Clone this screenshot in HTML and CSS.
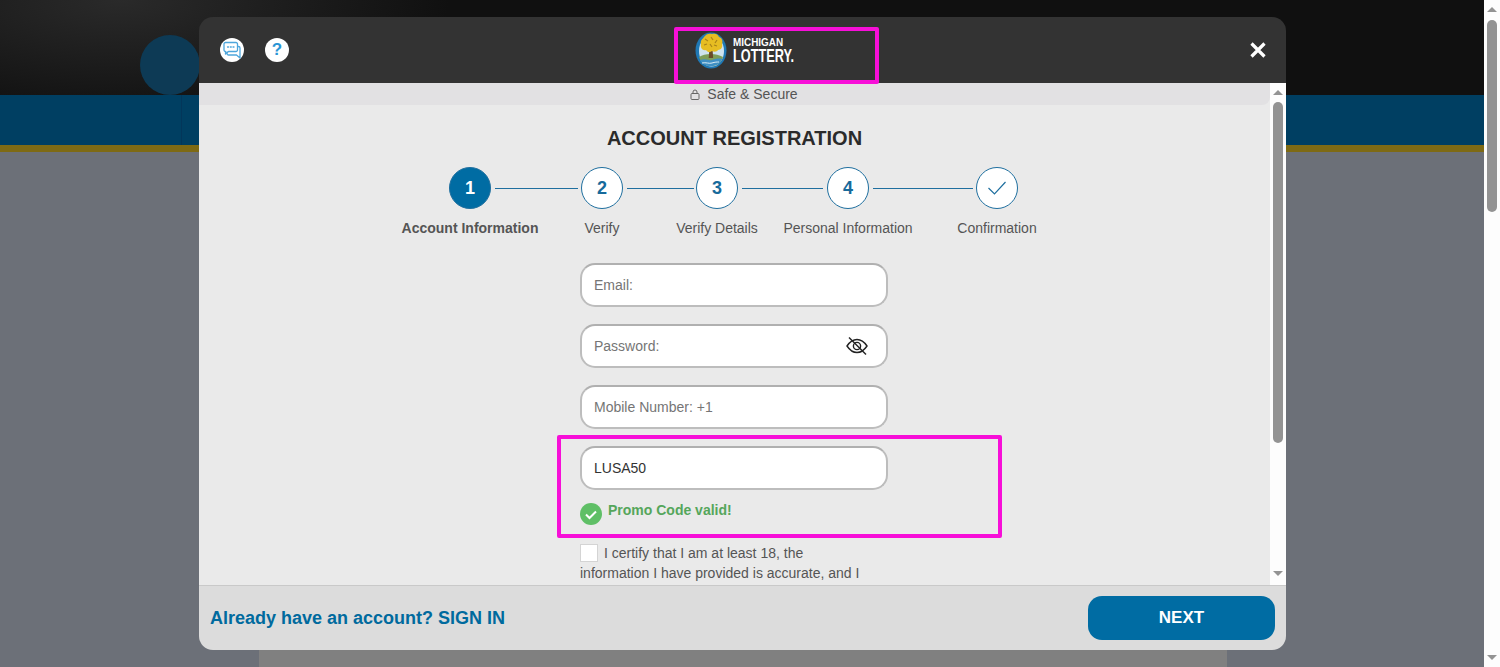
FILE: index.html
```html
<!DOCTYPE html>
<html lang="en">
<head>
    <meta charset="UTF-8">
    <meta name="viewport" content="width=device-width, initial-scale=1.0">
    <title>Michigan Lottery - Account Registration</title>
    <link rel="stylesheet" href="styles.css">
</head>
<body>
    <div class="page">
        <div class="site">
            <header class="site-header"><span class="site-logo"></span></header>
            <nav class="site-nav"><span class="nav-item"></span></nav>
            <main class="site-main">
                <section class="site-panel">
                    <p>Over 140 online games with chances to win up to $500,000 instantly!</p>
                </section>
            </main>
        </div>
        <div class="scrollbar page-scrollbar">
            <span class="arrow-up"></span>
            <span class="thumb"></span>
            <span class="arrow-down"></span>
        </div>
    </div>

    <div class="modal">
        <div class="modal-header">
            <div class="header-icons">
                <span class="round-icon">
                    <svg width="20" height="20" viewBox="0 0 20 20" fill="none" stroke="#4ea6dc" stroke-width="1.3" stroke-linejoin="round">
                        <path d="M3.5 2.5h10.5a1.5 1.5 0 0 1 1.5 1.5v6a1.5 1.5 0 0 1-1.5 1.5H6.5l-3 2.5v-2.5a1.5 1.5 0 0 1-1.5-1.5V4a1.5 1.5 0 0 1 1.5-1.5z"/>
                        <path d="M15.5 6.5h1a1.5 1.5 0 0 1 1.5 1.5v10l-3.5-3H6.5A1.5 1.5 0 0 1 5 13.5v-2"/>
                        <path d="M5.5 7h1M8.3 7h1M11 7h1" stroke-linecap="round"/>
                    </svg>
                </span>
                <span class="round-icon help-icon">?</span>
            </div>
            <div class="brand">
                <svg class="brand-mark" width="32" height="37" viewBox="0 0 32 37">
                    <ellipse cx="16" cy="18.5" rx="15.5" ry="18" fill="#1f78b4"/>
                    <ellipse cx="16.5" cy="19" rx="12.5" ry="15.5" fill="#cfe3ee"/>
                    <path d="M4 25c6-4 17-4 24 0-2 6-6 9-12 9S6 31 4 25z" fill="#7f9e5a"/>
                    <path d="M5 28c6-2 9 1 12 0s7-2 10-1c-2 5-6 7-11 7s-9-2-11-6z" fill="#3f8fc4"/>
                    <path d="M7 31c4-1 7 1 10 0s5-1 7-1" fill="none" stroke="#d8ecf5" stroke-width="1"/>
                    <path d="M14.5 16h3l.6 10h-4.4z" fill="#6a4a28"/>
                    <path d="M6 12c-1-4 2-5 3-7 2-3 5-4 8-3 3-1 6 0 7 3 3 1 4 4 3 7 1 3-1 6-4 6-1 2-4 2-6 1-2 2-5 1-6-1-3 1-6-2-5-6z" fill="#e6bd22"/>
                    <path d="M10 7l3 2M16 5l2 3M22 8l-2 3M9 13l3-1M15 12l2 3M22 14l-3-1" stroke="#a9831a" stroke-width="1.2" fill="none"/>
                </svg>
                <div class="brand-name">
                    <span class="brand-top">MICHIGAN</span>
                    <span class="brand-bottom">LOTTERY.</span>
                </div>
            </div>
            <svg class="close-icon" width="18" height="18" viewBox="0 0 18 18">
                <path d="M2.5 2.5l13 13M15.5 2.5l-13 13" stroke="#fff" stroke-width="3.2"/>
            </svg>
        </div>

        <div class="modal-content">
            <div class="reg-body">
                <div class="safe-bar">
                    <svg width="10" height="11" viewBox="0 0 10 11" fill="none" stroke="#666" stroke-width="1">
                        <rect x="1" y="4.5" width="8" height="6" rx="1"/>
                        <path d="M3 4.5V3a2 2 0 0 1 4 0v1.500"/>
                    </svg>
                    <span>Safe &amp; Secure</span>
                </div>

                <h1 class="reg-title">ACCOUNT REGISTRATION</h1>

                <div class="stepper">
                    <div class="step step-active">
                        <span class="step-circle">1</span>
                        <span class="step-label">Account Information</span>
                    </div>
                    <div class="step">
                        <span class="step-circle">2</span>
                        <span class="step-label">Verify</span>
                    </div>
                    <div class="step">
                        <span class="step-circle">3</span>
                        <span class="step-label">Verify Details</span>
                    </div>
                    <div class="step">
                        <span class="step-circle">4</span>
                        <span class="step-label">Personal Information</span>
                    </div>
                    <div class="step">
                        <span class="step-circle">
                            <svg width="22" height="16" viewBox="0 0 22 16" fill="none" stroke="#1f6f9f" stroke-width="1.2">
                                <path d="M2.500 8l6 6L19.500 2"/>
                            </svg>
                        </span>
                        <span class="step-label">Confirmation</span>
                    </div>
                </div>

                <form class="reg-form">
                    <div class="field"><input type="text" placeholder="Email:"></div>
                    <div class="field">
                        <input type="text" placeholder="Password:">
                        <svg class="eye-icon" width="24" height="20" viewBox="0 0 24 20" fill="none" stroke="#222" stroke-width="1.400">
                            <path d="M2 10c3-4.500 6-6.500 10-6.500S19 5.500 22 10c-3 4.500-6 6.500-10 6.500S5 14.500 2 10z"/>
                            <circle cx="12" cy="10" r="3.600"/>
                            <path d="M4 1.500l17 17"/>
                        </svg>
                    </div>
                    <div class="field"><input type="text" placeholder="Mobile Number: +1"></div>
                    <div class="field"><input type="text" value="LUSA50"></div>

                    <div class="promo-status">
                        <svg width="22" height="22" viewBox="0 0 22 22">
                            <circle cx="11" cy="11" r="11" fill="#5fbf66"/>
                            <path d="M6 11.500l3.500 3.500L16 8.500" fill="none" stroke="#fff" stroke-width="2"/>
                        </svg>
                        <span>Promo Code valid!</span>
                    </div>

                    <div class="certify">
                        <span class="checkbox"></span>I certify that I am at least 18, the information I have provided is accurate, and I
                    </div>
                </form>
            </div>
            <div class="scrollbar modal-scrollbar">
                <span class="arrow-up"></span>
                <span class="thumb"></span>
                <span class="arrow-down"></span>
            </div>
        </div>

        <div class="modal-footer">
            <a class="signin-link" href="#">Already have an account? SIGN IN</a>
            <button class="next-button" type="button">NEXT</button>
        </div>
    </div>

    <!-- highlight boxes drawn over the shot -->
    <div class="mark mark-logo"></div>
    <div class="mark mark-promo"></div>
</body>
</html>
```

FILE: styles.css
```css
* {
    box-sizing: border-box;
}
html, body {
    height: 100%;
}
body {
    margin: 0;
    overflow: hidden;
    font-family: "Liberation Sans", Arial, sans-serif;
    color: #555;
}
.page {
    display: flex;
    height: 667px;
    overflow: hidden;
}
.site {
    flex: 1;
    display: flex;
    flex-direction: column;
    min-width: 0;
}
.site-header {
    height: 133px;
    padding: 35px 0 0 140px;
    background: radial-gradient(ellipse 330px 120px at 120px 0, #2a2a2a, #101010);
}
.site-logo {
    display: block;
    width: 60px;
    height: 60px;
    border-radius: 50%;
    background: #0d3a55;
}
.site-nav {
    height: 57px;
    background: #003f62;
    border-bottom: 7px solid #7e6a14;
}
.nav-item {
    display: block;
    width: 182px;
    height: 50px;
    border-right: 1px solid #03365a;
}
.site-main {
    flex: 1;
    padding-top: 440px;
    background: #6c7078;
}
.site-panel {
    width: 968px;
    height: 200px;
    margin-left: 259px;
    padding: 27px 34px;
    background: #808080;
    color: #1c1c1c;
    font-size: 18px;
}
.site-panel p {
    margin: 0;
}

/* scrollbars */
.scrollbar {
    display: flex;
    flex-direction: column;
    align-items: center;
    width: 16px;
    background: #fdfdfd;
}
.thumb {
    width: 10px;
    background: #939393;
    border-radius: 5px;
}
.arrow-up, .arrow-down {
    width: 0;
    height: 0;
    border-left: 5px solid transparent;
    border-right: 5px solid transparent;
}
.arrow-up {
    border-bottom: 5px solid #939393;
}
.arrow-down {
    border-top: 5px solid #939393;
    margin-top: auto;
}
.page-scrollbar {
    padding: 7px 0 7px;
}
.page-scrollbar .thumb {
    height: 192px;
    margin-top: 8px;
}
.modal-scrollbar {
    padding: 7px 0 9px;
}
.modal-scrollbar .thumb {
    height: 341px;
    margin-top: 7px;
}

/* modal */
.modal {
    position: absolute;
    left: 199px;
    top: 17px;
    width: 1087px;
    height: 633px;
    display: flex;
    flex-direction: column;
    border-radius: 14px;
    overflow: hidden;
}
.modal-header {
    flex: none;
    display: flex;
    align-items: center;
    height: 66px;
    padding: 0 19px 0 21px;
    background: #333;
}
.header-icons {
    display: flex;
    gap: 21px;
    width: 475px;
}
.round-icon {
    display: flex;
    align-items: center;
    justify-content: center;
    width: 24px;
    height: 24px;
    border-radius: 50%;
    background: #fff;
}
.help-icon {
    color: #2a95d5;
    font-size: 17px;
    font-weight: bold;
}
.brand {
    display: flex;
    align-items: center;
    gap: 6px;
    flex: 1;
}
.brand-name {
    display: flex;
    flex-direction: column;
    color: #fff;
    font-weight: bold;
}
.brand-top {
    height: 11px;
    font-size: 11px;
    line-height: 11px;
    transform: scaleX(0.9);
    transform-origin: left;
}
.brand-bottom {
    height: 16px;
    font-size: 19px;
    line-height: 16px;
    transform: scaleX(0.67);
    transform-origin: left;
}
.close-icon {
    flex: none;
}
.modal-content {
    flex: 1;
    display: flex;
    min-height: 0;
}
.reg-body {
    flex: 1;
    min-width: 0;
    overflow: hidden;
    background: #eaeaea;
}
.safe-bar {
    display: flex;
    align-items: center;
    justify-content: center;
    gap: 7px;
    height: 22px;
    padding-left: 19px;
    background: #e2e1e3;
    border-bottom-right-radius: 8px;
    font-size: 14px;
    color: #555;
}
.reg-title {
    margin: 21px 0 17px;
    font-size: 20px;
    line-height: 24px;
    text-align: center;
    color: #2b2b2b;
}
.stepper {
    display: flex;
    margin-left: 201px;
}
.step {
    position: relative;
    display: flex;
    flex-direction: column;
    align-items: center;
    gap: 9px;
}
.step:nth-child(1) { width: 140px; }
.step:nth-child(2) { width: 124px; }
.step:nth-child(3) { width: 106px; }
.step:nth-child(4) { width: 156px; }
.step:nth-child(5) { width: 142px; }
.step::after {
    content: "";
    position: absolute;
    top: 21px;
    left: calc(50% + 25px);
    height: 1px;
    background: #1f6f9f;
}
.step:nth-child(1)::after { width: 83px; }
.step:nth-child(2)::after { width: 67px; }
.step:nth-child(3)::after { width: 81px; }
.step:nth-child(4)::after { width: 100px; }
.step:nth-child(5)::after { display: none; }
.step-circle {
    display: flex;
    align-items: center;
    justify-content: center;
    width: 42px;
    height: 42px;
    border: 1px solid #1f6f9f;
    border-radius: 50%;
    background: #fff;
    color: #176a9b;
    font-size: 18px;
    font-weight: bold;
}
.step-label {
    font-size: 14px;
    line-height: 20px;
    white-space: nowrap;
    color: #555;
}
.step-active .step-circle {
    background: #006ca3;
    color: #fff;
}
.step-active .step-label {
    font-weight: bold;
}
.reg-form {
    width: 308px;
    margin: 25px 0 0 381px;
}
.field {
    display: flex;
    align-items: center;
    height: 44px;
    margin-bottom: 17px;
    padding: 0 17px 0 12px;
    background: #fff;
    border: 2px solid #bdbdbd;
    border-top-color: #b0b0b0;
    border-radius: 15px;
}
.field input {
    flex: 1;
    min-width: 0;
    padding: 0;
    border: none;
    outline: none;
    background: transparent;
    font-family: inherit;
    font-size: 14px;
    color: #333;
}
.field input::placeholder {
    color: #757575;
    opacity: 1;
}
.promo-status {
    display: flex;
    gap: 6px;
    margin-top: -4px;
    color: #55a65b;
    font-size: 14px;
    font-weight: bold;
    line-height: 16px;
}
.promo-status span {
    margin-top: -1px;
}
.promo-status svg {
    flex: none;
}
.certify {
    width: 292px;
    margin-top: 18px;
    font-size: 14px;
    line-height: 20px;
    color: #555;
}
.checkbox {
    display: inline-block;
    width: 18px;
    height: 18px;
    margin-right: 6px;
    vertical-align: -4px;
    background: #fff;
    border: 1px solid #d4d4d4;
}
.modal-footer {
    flex: none;
    display: flex;
    align-items: center;
    justify-content: space-between;
    height: 65px;
    padding: 0 11px;
    background: #dcdcdc;
    border-top: 1px solid #c9c9c9;
}
.signin-link {
    color: #006a9e;
    font-size: 18px;
    font-weight: bold;
    text-decoration: none;
}
.next-button {
    width: 187px;
    height: 44px;
    border: none;
    border-radius: 14px;
    background: #006ca3;
    color: #fff;
    font-family: inherit;
    font-size: 17px;
    font-weight: bold;
}

/* highlight boxes */
.mark {
    position: absolute;
    border: 4px solid #f70fd8;
    border-radius: 2px;
}
.mark-logo {
    left: 674px;
    top: 27px;
    width: 205px;
    height: 57px;
}
.mark-promo {
    left: 557px;
    top: 435px;
    width: 445px;
    height: 103px;
}
```
